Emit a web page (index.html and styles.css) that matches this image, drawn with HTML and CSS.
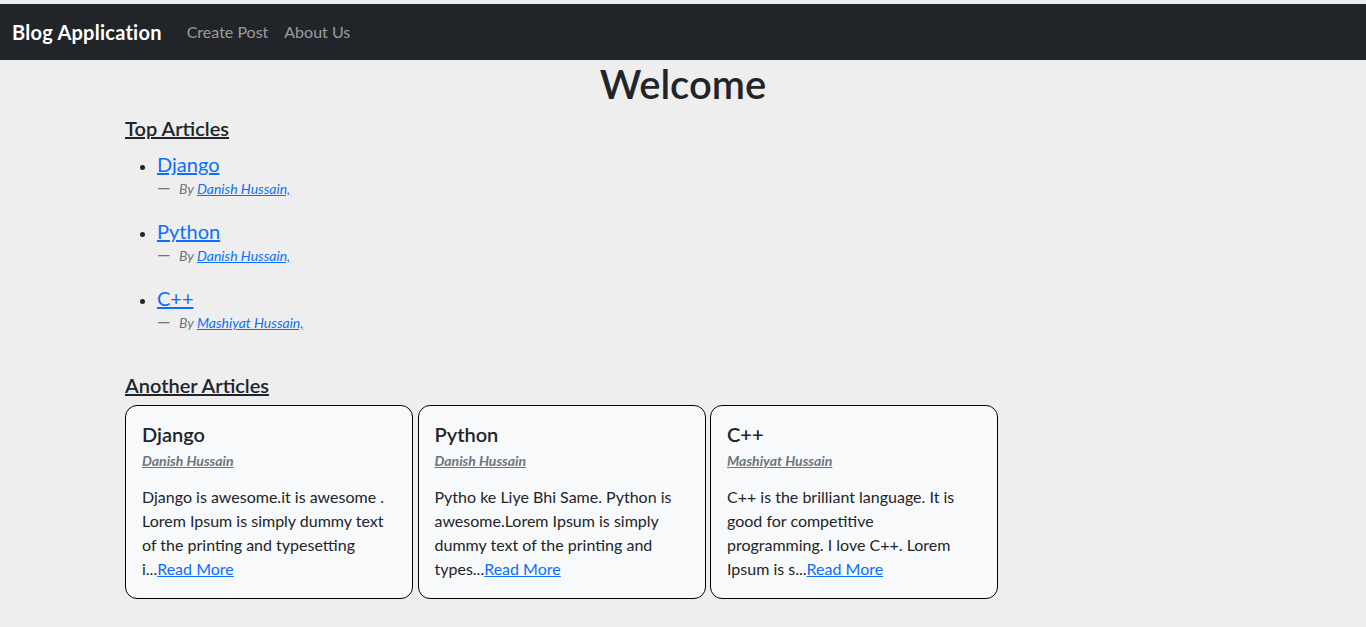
FILE: index.html
```html
<!DOCTYPE html>
<html lang="en">
<head>
<meta charset="utf-8">
<title>Blog Application</title>
<link rel="stylesheet" href="styles.css">
</head>
<body>
<nav class="navbar">
  <a class="brand" href="#">Blog Application</a>
  <a class="nav-link" href="#">Create Post</a>
  <a class="nav-link" href="#">About Us</a>
</nav>
<main class="container">
  <h1 class="title">Welcome</h1>
  <h2 class="section-title">Top Articles</h2>
  <ul class="top-list">
    <li>
      <a class="top-link" href="#">Django</a>
      <div class="byline"><span class="dash">—</span><i>By <a href="#">Danish Hussain,</a></i></div>
    </li>
    <li>
      <a class="top-link" href="#">Python</a>
      <div class="byline"><span class="dash">—</span><i>By <a href="#">Danish Hussain,</a></i></div>
    </li>
    <li>
      <a class="top-link" href="#">C++</a>
      <div class="byline"><span class="dash">—</span><i>By <a href="#">Mashiyat Hussain,</a></i></div>
    </li>
  </ul>
  <h2 class="section-title another">Another Articles</h2>
  <div class="cards">
    <div class="card">
      <h3 class="card-title">Django</h3>
      <a class="card-author" href="#">Danish Hussain</a>
      <p class="card-text">Django is awesome.it is awesome . Lorem Ipsum is simply dummy text of the printing and typesetting i...<a href="#">Read More</a></p>
    </div>
    <div class="card">
      <h3 class="card-title">Python</h3>
      <a class="card-author" href="#">Danish Hussain</a>
      <p class="card-text">Pytho ke Liye Bhi Same. Python is awesome.Lorem Ipsum is simply dummy text of the printing and types...<a href="#">Read More</a></p>
    </div>
    <div class="card">
      <h3 class="card-title">C++</h3>
      <a class="card-author" href="#">Mashiyat Hussain</a>
      <p class="card-text">C++ is the brilliant language. It is good for competitive programming. I love C++. Lorem Ipsum is s...<a href="#">Read More</a></p>
    </div>
  </div>
</main>
</body>
</html>
```
FILE: styles.css
```css
* { box-sizing: border-box; }
html, body {
  margin: 0;
  background: #eeeeee;
}
body {
  padding-top: 4px;
  font-family: Lato, "Noto Sans", sans-serif;
  font-size: 16px;
  line-height: 1.5;
  color: #212529;
}
a { color: #0d6efd; }

.navbar {
  display: flex;
  align-items: center;
  height: 56px;
  padding: 0 12px;
  background: #212529;
}
.brand {
  color: #fff;
  font-size: 20px;
  font-weight: 700;
  letter-spacing: 0.25px;
  text-decoration: none;
  margin-right: 17px;
}
.nav-link {
  color: rgba(255,255,255,.55);
  text-decoration: none;
  padding: 8px;
}

.container {
  width: 1116px;
  margin: 0 auto;
}
.title {
  margin: 0 0 8px;
  text-align: center;
  font-size: 40px;
  font-weight: 600;
  line-height: 1.2;
}
.section-title {
  margin: 0;
  font-size: 20px;
  font-weight: 600;
  line-height: 1.2;
  text-decoration: underline;
}
.top-list {
  margin: 12px 0 0;
  padding-left: 32px;
}
.top-list li {
  margin-bottom: 20px;
}
.top-link {
  font-size: 20px;
  line-height: 1.2;
}
.byline {
  font-size: 14px;
  color: #6c757d;
  line-height: 1.5;
}
.dash {
  display: inline-block;
  width: 22px;
  font-size: 17px;
  line-height: 1;
}
.another { margin-top: 40px; }

.cards {
  display: flex;
  gap: 4.5px;
  margin-top: 8px;
}
.card {
  width: 288px;
  padding: 16px 16px 17px;
  border: 1px solid #000;
  border-radius: 12px;
  background: #f8f9fa;
}
.card-title {
  margin: 0 0 4px;
  font-size: 20px;
  font-weight: 600;
  line-height: 1.2;
}
.card-author {
  display: block;
  font-size: 14px;
  font-style: italic;
  font-weight: 700;
  color: #6c757d;
}
.card-text {
  margin: 14px 0 0;
  padding-right: 9px;
}
```
